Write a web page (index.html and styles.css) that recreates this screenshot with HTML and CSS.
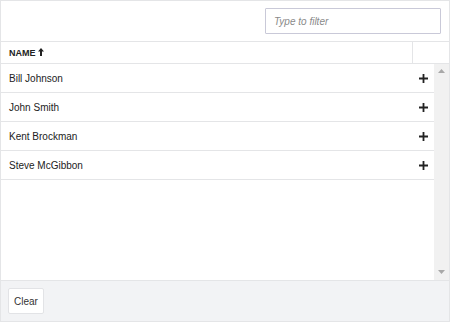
FILE: index.html
```html
<!DOCTYPE html>
<html>
<head>
<meta charset="utf-8">
<link rel="stylesheet" href="styles.css">
</head>
<body>
<div class="grid">
  <div class="toolbar">
    <input class="filter" type="text" placeholder="Type to filter">
  </div>
  <div class="header">
    <div class="hcell name">NAME
      <svg class="sort" width="6" height="8" viewBox="0 0 6 8"><path d="M3 0 L6 3.5 L4 3.5 L4 8 L2 8 L2 3.5 L0 3.5 Z" fill="#222"/></svg>
    </div>
    <div class="hcell"></div>
  </div>
  <div class="body">
    <div class="rows">
      <div class="row"><span class="cell">Bill Johnson</span><span class="act"><svg width="9" height="9" viewBox="0 0 9 9"><path d="M4.5 0V9M0 4.5H9" stroke="#222" stroke-width="1.8"/></svg></span></div>
      <div class="row"><span class="cell">John Smith</span><span class="act"><svg width="9" height="9" viewBox="0 0 9 9"><path d="M4.5 0V9M0 4.5H9" stroke="#222" stroke-width="1.8"/></svg></span></div>
      <div class="row"><span class="cell">Kent Brockman</span><span class="act"><svg width="9" height="9" viewBox="0 0 9 9"><path d="M4.5 0V9M0 4.5H9" stroke="#222" stroke-width="1.8"/></svg></span></div>
      <div class="row"><span class="cell">Steve McGibbon</span><span class="act"><svg width="9" height="9" viewBox="0 0 9 9"><path d="M4.5 0V9M0 4.5H9" stroke="#222" stroke-width="1.8"/></svg></span></div>
    </div>
    <div class="scrollbar">
      <svg width="7" height="4" viewBox="0 0 7 4"><path d="M0 4L3.5 0L7 4Z" fill="#a8a8a8"/></svg>
      <svg width="7" height="4" viewBox="0 0 7 4"><path d="M0 0L7 0L3.5 4Z" fill="#a8a8a8"/></svg>
    </div>
  </div>
  <div class="footer">
    <button class="btn">Clear</button>
  </div>
</div>
</body>
</html>
```

FILE: styles.css
```css
* { box-sizing: border-box; }
html, body { margin: 0; padding: 0; background: #fff; }
body { font-family: "Liberation Sans", Arial, sans-serif; color: #222; }

.grid {
  width: 450px;
  height: 322px;
  border: 1px solid #e4e5e7;
  display: flex;
  flex-direction: column;
}

.toolbar {
  height: 41px;
  flex: none;
  border-bottom: 1px solid #e4e5e7;
  display: flex;
  justify-content: flex-end;
  align-items: flex-start;
  padding: 7px 8px 0 0;
}

.filter {
  width: 176px;
  height: 26px;
  border: 1px solid #c9c9d8;
  border-radius: 1px;
  padding: 0 0 0 8px;
  font-family: "Liberation Sans", Arial, sans-serif;
  font-size: 10px;
  font-style: italic;
  outline: none;
  background: #fff;
}
.filter::placeholder { color: #8a8a8a; font-style: italic; }

.header {
  height: 22px;
  flex: none;
  border-bottom: 1px solid #e4e5e7;
  display: grid;
  grid-template-columns: 412px 1fr;
}
.hcell {
  display: flex;
  align-items: center;
}
.hcell.name {
  border-right: 1px solid #e4e5e7;
  padding-left: 8px;
  font-size: 9px;
  font-weight: bold;
  color: #222;
  gap: 2px;
}
.sort { margin-top: -1px; }

.body {
  flex: 1;
  display: flex;
  min-height: 0;
}
.rows { flex: 1; }
.row {
  height: 29px;
  border-bottom: 1px solid #e4e5e7;
  display: grid;
  grid-template-columns: 411px 22px;
  align-items: center;
}
.cell {
  padding-left: 8px;
  font-size: 10px;
  color: #222;
}
.act {
  display: flex;
  justify-content: center;
  align-items: center;
}

.scrollbar {
  width: 15px;
  flex: none;
  background: #f1f1f1;
  display: flex;
  flex-direction: column;
  justify-content: space-between;
  align-items: center;
  padding: 5px 0 6px;
}

.footer {
  height: 41px;
  flex: none;
  border-top: 1px solid #e4e5e7;
  background: #f2f3f5;
  padding: 7px 0 0 7px;
}
.btn {
  height: 26px;
  width: 36px;
  padding: 0;
  background: #fff;
  border: 1px solid #e2e3e6;
  border-radius: 2px;
  font-family: "Liberation Sans", Arial, sans-serif;
  font-size: 10px;
  color: #333;
}
```
